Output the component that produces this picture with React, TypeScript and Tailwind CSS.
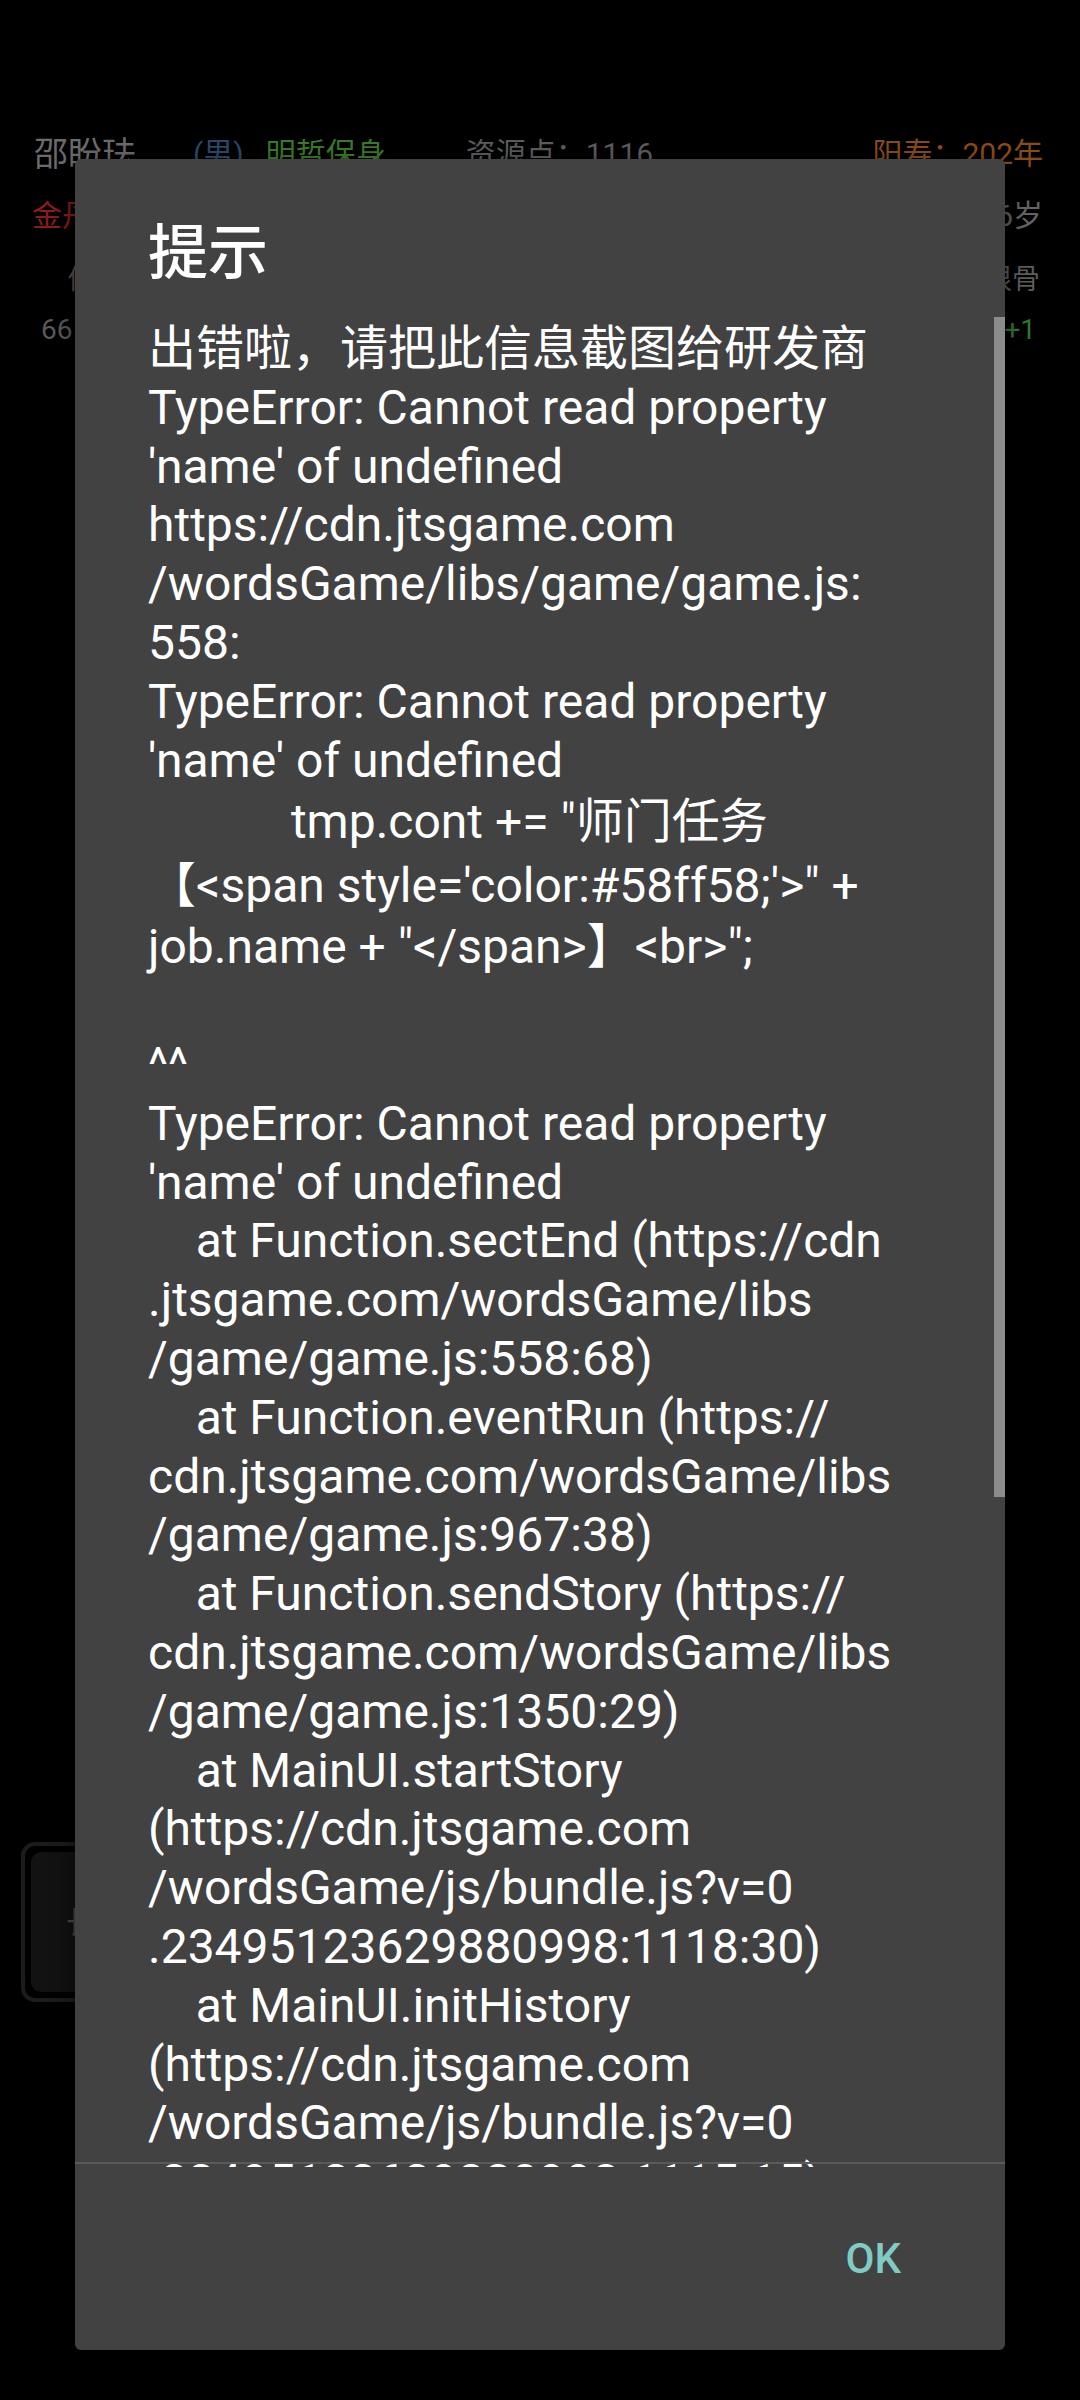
import React from "react";

type Line = { t: string; cjk?: boolean };

const lines: Line[] = [
  { t: "出错啦，请把此信息截图给研发商" },
  { t: "TypeError: Cannot read property" },
  { t: "'name' of undefined" },
  { t: "https://cdn.jtsgame.com" },
  { t: "/wordsGame/libs/game/game.js:" },
  { t: "558:" },
  { t: "TypeError: Cannot read property" },
  { t: "'name' of undefined" },
  { t: "            tmp.cont += \"师门任务", cjk: true },
  { t: "【<span style='color:#58ff58;'>\" +", cjk: true },
  { t: "job.name + \"</span>】<br>\";" },
  { t: "" },
  { t: "^^" },
  { t: "TypeError: Cannot read property" },
  { t: "'name' of undefined" },
  { t: "    at Function.sectEnd (https://cdn" },
  { t: ".jtsgame.com/wordsGame/libs" },
  { t: "/game/game.js:558:68)" },
  { t: "    at Function.eventRun (https://" },
  { t: "cdn.jtsgame.com/wordsGame/libs" },
  { t: "/game/game.js:967:38)" },
  { t: "    at Function.sendStory (https://" },
  { t: "cdn.jtsgame.com/wordsGame/libs" },
  { t: "/game/game.js:1350:29)" },
  { t: "    at MainUI.startStory" },
  { t: "(https://cdn.jtsgame.com" },
  { t: "/wordsGame/js/bundle.js?v=0" },
  { t: ".23495123629880998:1118:30)" },
  { t: "    at MainUI.initHistory" },
  { t: "(https://cdn.jtsgame.com" },
  { t: "/wordsGame/js/bundle.js?v=0" },
  { t: ".23495123629880998:1115:15)" },
];

export default function App() {
  return (
    <div className="relative w-[1080px] h-[2400px] bg-black overflow-hidden font-['Roboto','Noto_Sans_CJK_SC',sans-serif]">
      {/* background game screen (dimmed) */}
      <div className="flex flex-col pt-[134px]">
        <div className="h-[40px] flex items-center pl-[34px] pr-[37px] text-[30px] leading-[40px]">
          <span className="text-[34px] text-[#6b6b6b]">邵盼珐</span>
          <span className="ml-[57px] text-[#2b4a6b]">(男)</span>
          <span className="ml-[22px] text-[#3a7a2a]">明哲保身</span>
          <span className="ml-[80px] text-[#5c5c5c]">资源点：1116</span>
          <span className="ml-auto text-[#8a4c16]">阳寿：202年</span>
        </div>
        <div className="mt-[22px] h-[40px] flex items-center pl-[32px] pr-[37px] text-[30px] leading-[40px]">
          <span className="text-[#8c1c1c]">金丹</span>
          <span className="ml-auto text-[#646464]">16岁</span>
        </div>
        <div className="mt-[24px] h-[40px] flex items-center pl-[68px] pr-[40px] text-[28px] leading-[40px]">
          <span className="text-[#555555]">修为</span>
          <span className="ml-auto text-[#5e5e5e]">根骨</span>
        </div>
        <div className="mt-[10px] h-[40px] flex items-center pl-[41px] pr-[44px] text-[28px] leading-[40px]">
          <span className="text-[#5a5a5a]">66</span>
          <span className="ml-auto text-[#5a5a5a]">3</span>
          <span className="text-[#2e7a2e]">+1</span>
        </div>
        <div className="mt-[1492px] ml-[21px] w-[190px] h-[160px] rounded-[14px] border-[4px] border-[#1c1c1c] p-[6px]">
          <div className="w-full h-full rounded-[10px] bg-[#121212] flex items-center pl-[35px] text-[30px] text-[#4a4a4a]">
            长
          </div>
        </div>
      </div>

      {/* dialog */}
      <div className="absolute left-[75px] top-[159px] w-[930px] h-[2191px] bg-[#424242] rounded-[6px] flex flex-col z-10 shadow-[0_8px_24px_rgba(0,0,0,0.6)]">
        <div className="pt-[59px] pl-[73px] h-[131px] text-[60px] leading-[72px] font-medium text-white">
          提示
        </div>
        <div className="relative mt-[30px] flex-1 overflow-hidden">
          <div className="pl-[73px] pr-[60px] text-[48px] text-white">
            {lines.map((l, i) => (
              <div
                key={i}
                className={
                  l.cjk
                    ? "h-[64px] leading-[64px] whitespace-pre"
                    : "h-[58.8px] leading-[58.8px] whitespace-pre"
                }
              >
                {l.t === "" ? "\u00a0" : l.t}
              </div>
            ))}
          </div>
          <div className="absolute left-0 right-0 bottom-[3px] h-[2px] bg-[#5a5a5a]" />
        </div>
        <div className="h-[183px] flex items-center justify-end pr-[104px]">
          <span className="text-[42px] leading-[50px] font-medium text-[#80cbc4]">OK</span>
        </div>
        <div className="absolute right-0 top-[158px] w-[11px] h-[1180px] bg-[#8c8c8c]" />
      </div>
    </div>
  );
}
